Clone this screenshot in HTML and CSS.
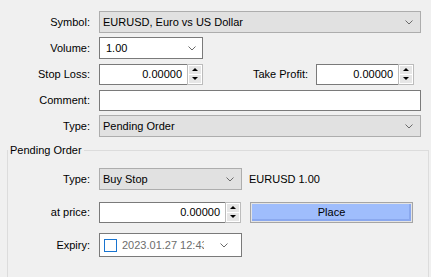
FILE: index.html
```html
<!DOCTYPE html>
<html>
<head>
	<title>Order</title>
	<link rel="stylesheet" href="styles.css">
</head>
<body>
	<div class="ticket">
		<div class="row">
			<label class="lbl">Symbol:</label>
			<div class="combo combo-ro grow">
				<span class="combo-text">EURUSD, Euro vs US Dollar</span>
				<svg class="chev" width="8" height="5" viewBox="0 0 8 5"><polyline points="0.5,0.5 4,4 7.5,0.5" fill="none" stroke="#6a6a6a" stroke-width="1"/></svg>
			</div>
		</div>
		<div class="row">
			<label class="lbl">Volume:</label>
			<div class="combo combo-edit volume">
				<span class="combo-text">1.00</span>
				<svg class="chev" width="8" height="5" viewBox="0 0 8 5"><polyline points="0.5,0.5 4,4 7.5,0.5" fill="none" stroke="#6a6a6a" stroke-width="1"/></svg>
			</div>
		</div>
		<div class="row">
			<label class="lbl">Stop Loss:</label>
			<div class="spin sl">
				<div class="spin-field">0.00000</div>
				<div class="spin-btns">
					<div class="spin-btn"><span class="tri-up"></span></div>
					<div class="spin-btn"><span class="tri-down"></span></div>
				</div>
			</div>
			<label class="lbl-tp">Take Profit:</label>
			<div class="spin tp">
				<div class="spin-field">0.00000</div>
				<div class="spin-btns">
					<div class="spin-btn"><span class="tri-up"></span></div>
					<div class="spin-btn"><span class="tri-down"></span></div>
				</div>
			</div>
		</div>
		<div class="row">
			<label class="lbl">Comment:</label>
			<div class="text-input grow"></div>
		</div>
		<div class="row">
			<label class="lbl">Type:</label>
			<div class="combo combo-ro grow">
				<span class="combo-text">Pending Order</span>
				<svg class="chev" width="8" height="5" viewBox="0 0 8 5"><polyline points="0.5,0.5 4,4 7.5,0.5" fill="none" stroke="#6a6a6a" stroke-width="1"/></svg>
			</div>
		</div>
	</div>

	<fieldset class="group">
		<legend>Pending Order</legend>
		<div class="group-rows">
			<div class="row">
				<label class="lbl lbl-in">Type:</label>
				<div class="combo combo-ro pend-type">
					<span class="combo-text">Buy Stop</span>
					<svg class="chev" width="8" height="5" viewBox="0 0 8 5"><polyline points="0.5,0.5 4,4 7.5,0.5" fill="none" stroke="#6a6a6a" stroke-width="1"/></svg>
				</div>
				<span class="info">EURUSD 1.00</span>
			</div>
			<div class="row">
				<label class="lbl lbl-in">at price:</label>
				<div class="spin price">
					<div class="spin-field">0.00000</div>
					<div class="spin-btns">
						<div class="spin-btn"><span class="tri-up"></span></div>
						<div class="spin-btn"><span class="tri-down"></span></div>
					</div>
				</div>
				<button class="place">Place</button>
			</div>
			<div class="row">
				<label class="lbl lbl-in">Expiry:</label>
				<div class="expiry">
					<span class="check"></span>
					<span class="date">2023.01.27 12:43</span>
					<svg class="chev" width="8" height="5" viewBox="0 0 8 5"><polyline points="0.5,0.5 4,4 7.5,0.5" fill="none" stroke="#6a6a6a" stroke-width="1"/></svg>
				</div>
			</div>
		</div>
	</fieldset>
</body>
</html>
```

FILE: styles.css
```css
html, body {
	margin: 0;
	padding: 0;
	height: 277px;
	overflow: hidden;
}

body {
	background-color: #f0f0f0;
	font-family: 'Liberation Sans', Arial, sans-serif;
	font-size: 11px;
	color: #000;
}

.ticket {
	display: flex;
	flex-direction: column;
	gap: 4px;
	padding: 11px 10px 0 0;
}

.row {
	display: flex;
	align-items: center;
	height: 22px;
}

.lbl {
	width: 90px;
	margin-right: 9px;
	text-align: right;
	flex: none;
}

.lbl-in {
	width: 82px;
}

.grow {
	flex: 1;
}

.combo {
	box-sizing: border-box;
	height: 22px;
	display: flex;
	align-items: center;
	border: 1px solid #adadad;
	padding: 0 7px 0 3px;
}

.combo-ro {
	background-color: #e1e1e1;
}

.combo-edit {
	background-color: #fff;
	border-color: #7a7a7a;
	padding-left: 6px;
}

.combo-text {
	flex: 1;
	white-space: nowrap;
	overflow: hidden;
}

.chev {
	flex: none;
	display: block;
}

.volume {
	width: 104px;
	padding-right: 6px;
}

.spin {
	box-sizing: border-box;
	height: 21px;
	display: flex;
	flex: none;
}

.spin-field {
	flex: 1;
	box-sizing: border-box;
	border: 1px solid #7a7a7a;
	border-right: none;
	background-color: #fff;
	text-align: right;
	padding-right: 5px;
	line-height: 19px;
}

.spin-btns {
	width: 16px;
	box-sizing: border-box;
	border: 1px solid #bcbcbc;
	background-color: #fff;
	display: flex;
	flex-direction: column;
	padding: 1px;
	gap: 1px;
}

.spin-btn {
	flex: 1;
	background-color: #e6e6e6;
	display: flex;
	align-items: center;
	justify-content: center;
}

.tri-up {
	width: 0;
	height: 0;
	border-left: 3px solid transparent;
	border-right: 3px solid transparent;
	border-bottom: 3px solid #000;
}

.tri-down {
	width: 0;
	height: 0;
	border-left: 3px solid transparent;
	border-right: 3px solid transparent;
	border-top: 3px solid #000;
}

.sl {
	width: 104px;
}

.lbl-tp {
	flex: 1;
	text-align: right;
	margin-right: 8px;
}

.tp {
	width: 98px;
	margin-right: 7px;
}

.text-input {
	box-sizing: border-box;
	height: 21px;
	border: 1px solid #7a7a7a;
	background-color: #fff;
}

.group {
	margin: 6px 2px 0 7px;
	padding: 0;
	border: 1px solid #dcdcdc;
	min-height: 140px;
}

.group legend {
	padding: 0 2px;
	margin: 0;
	line-height: 14px;
}

.group-rows {
	display: flex;
	flex-direction: column;
	gap: 11px;
	padding-top: 11px;
}

.pend-type {
	width: 143px;
}

.info {
	margin-left: 7px;
}

.price {
	width: 142px;
}

.place {
	width: 163px;
	height: 21px;
	margin-left: 9px;
	border: 1px solid #a5a5a5;
	box-shadow: inset 0 0 0 1px #e4e4e4, inset -2px -2px 0 1px #8aa8ee;
	background-color: #9fbdfc;
	font-family: inherit;
	font-size: 11px;
	color: #000;
	padding: 0;
}

.expiry {
	box-sizing: border-box;
	width: 143px;
	height: 24px;
	border: 1px solid #7a7a7a;
	background-color: #fff;
	display: flex;
	align-items: center;
	padding: 0 13px 0 4px;
}

.check {
	width: 13px;
	height: 13px;
	box-sizing: border-box;
	border: 1px solid #1874d0;
	flex: none;
}

.date {
	margin-left: 5px;
	width: 82px;
	overflow: hidden;
	white-space: nowrap;
	color: #6d6d6d;
}

.expiry .chev {
	margin-left: auto;
}
```
